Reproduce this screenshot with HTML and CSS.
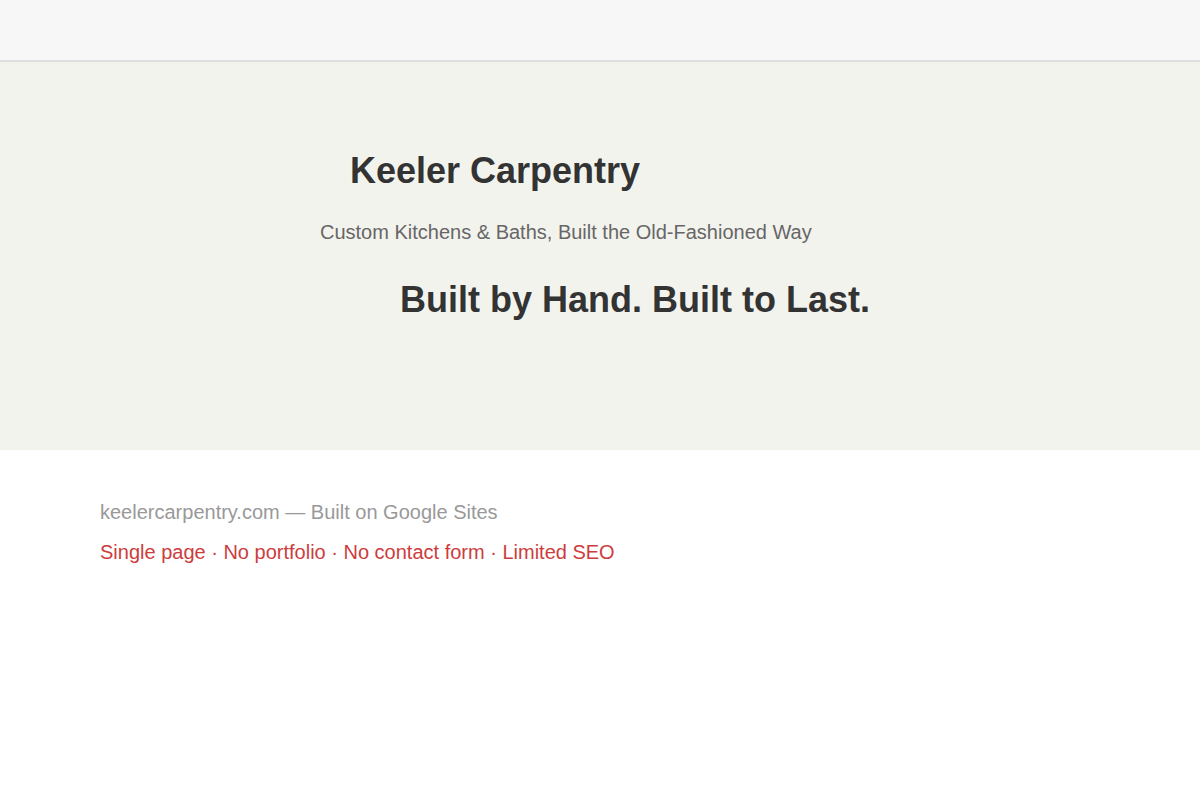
FILE: index.html
```html
<!DOCTYPE html>
<html lang="en">
<head>
    <meta charset="UTF-8">
    <meta name="viewport" content="width=device-width, initial-scale=1.0">
    <title>Keeler Carpentry</title>
    <link rel="stylesheet" href="styles.css">
</head>
<body>
    <div class="topbar"></div>
    <div class="hero">
        <h1 class="site-title">Keeler Carpentry</h1>
        <p class="tagline">Custom Kitchens &amp; Baths, Built the Old-Fashioned Way</p>
        <h2 class="headline">Built by Hand. Built to Last.</h2>
    </div>
    <div class="notes">
        <p class="source">keelercarpentry.com — Built on Google Sites</p>
        <p class="issues">Single page · No portfolio · No contact form · Limited SEO</p>
    </div>
</body>
</html>
```
FILE: styles.css
```css
body {
    font-family: "Liberation Sans", Arial, sans-serif;
    margin: 0;
    padding: 0;
    background-color: #fff;
}
.topbar {
    height: 60px;
    background: #f7f7f7;
    border-bottom: 2px solid #dedede;
}
.hero {
    height: 388px;
    background: #f3f3ee;
    padding: 88px 0 0 320px;
    box-sizing: border-box;
    color: #333;
}
.site-title {
    margin: 0 0 0 30px;
    font-size: 36px;
    line-height: 42px;
    font-weight: bold;
}
.tagline {
    margin: 28px 0 0;
    font-size: 20px;
    line-height: 24px;
    color: #666;
}
.headline {
    margin: 35px 0 0 80px;
    font-size: 36px;
    line-height: 42px;
    font-weight: bold;
}
.notes {
    padding: 50px 100px;
}
.source {
    margin: 0;
    font-size: 20px;
    line-height: 24px;
    color: #999;
}
.issues {
    margin: 16px 0 0;
    font-size: 20px;
    line-height: 24px;
    color: #cc3d3d;
}
```
